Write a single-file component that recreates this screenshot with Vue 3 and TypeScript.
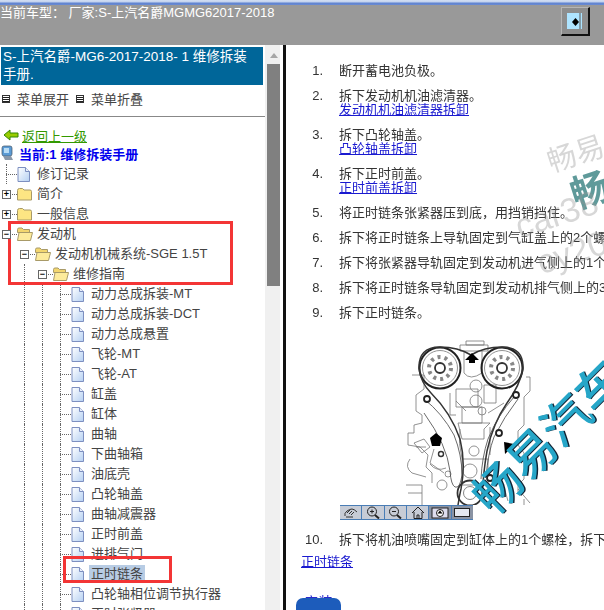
<script setup lang="ts">
interface TreeRow {
  label: string
  depth: number
  kind: 'doc' | 'plus' | 'minus'
  selected?: boolean
}
interface Step {
  num: string
  text: string
  link?: string
}

const leafNames = [
  '动力总成拆装-MT', '动力总成拆装-DCT', '动力总成悬置', '飞轮-MT', '飞轮-AT', '缸盖', '缸体', '曲轴',
  '下曲轴箱', '油底壳', '凸轮轴盖', '曲轴减震器', '正时前盖', '进排气门', '正时链条', '凸轮轴相位调节执行器', '正时张紧器',
]

const rows: TreeRow[] = [
  { label: '修订记录', depth: 0, kind: 'doc' },
  { label: '简介', depth: 0, kind: 'plus' },
  { label: '一般信息', depth: 0, kind: 'plus' },
  { label: '发动机', depth: 0, kind: 'minus' },
  { label: '发动机机械系统-SGE 1.5T', depth: 1, kind: 'minus' },
  { label: '维修指南', depth: 2, kind: 'minus' },
  ...leafNames.map((label): TreeRow => ({ label, depth: 3, kind: 'doc', selected: label === '正时链条' })),
]

const stepsTop: Step[] = [
  { num: '1.', text: '断开蓄电池负极。' },
  { num: '2.', text: '拆下发动机机油滤清器。', link: '发动机机油滤清器拆卸' },
  { num: '3.', text: '拆下凸轮轴盖。', link: '凸轮轴盖拆卸' },
  { num: '4.', text: '拆下正时前盖。', link: '正时前盖拆卸' },
  { num: '5.', text: '将正时链条张紧器压到底，用挡销挡住。' },
  { num: '6.', text: '拆下将正时链条上导轨固定到气缸盖上的2个螺栓。' },
  { num: '7.', text: '拆下将张紧器导轨固定到发动机进气侧上的1个螺栓。' },
  { num: '8.', text: '拆下将正时链条导轨固定到发动机排气侧上的3个螺栓。' },
  { num: '9.', text: '拆下正时链条。' },
]
</script>

<template>
  <div class="page">
    <header class="topbar">
      <div class="strip"></div>
      <div class="topbar-body">
        <span class="car">当前车型： 厂家:S-上汽名爵MGMG62017-2018</span>
        <div class="toggle">
          <div class="toggle-inner">
            <svg width="17" height="18" viewBox="0 0 17 18">
              <path d="M5 9l3.500-4 3.500 4-3.500 4z" fill="#000" />
              <path d="M13 0v18" stroke="#555" stroke-width="1" />
            </svg>
          </div>
        </div>
      </div>
    </header>

    <div class="main">
      <aside class="side">
        <div class="side-inner">
          <div class="manual-title">S-上汽名爵-MG6-2017-2018- 1 维修拆装手册.</div>
          <div class="menu-row">
            <span class="menu-item"><i class="menu-ico"></i>菜单展开</span>
            <span class="menu-item"><i class="menu-ico"></i>菜单折叠</span>
          </div>
          <div class="back">
            <svg width="16" height="12" viewBox="0 0 16 12">
              <path d="M1 6l6-5v3h8v4H7v3z" fill="#9c0" stroke="#380" stroke-width="1" />
            </svg>
            <a class="back-link">返回上一级</a>
          </div>
          <div class="current">
            <svg width="13" height="17" viewBox="0 0 13 17">
              <rect x="1" y="1" width="10" height="10" rx="2" fill="#5b9bd5" stroke="#456" stroke-width=".7" />
              <rect x="3" y="3" width="5" height="5" fill="#b8dcf5" />
              <path d="M2 11h8l2 4H4z" fill="#8a98a8" />
            </svg>
            <span>当前:1 维修拆装手册</span>
          </div>
          <div class="tree">
            <div v-for="row in rows" :key="row.label" class="tree-row">
              <span v-for="n in row.depth" :key="n" class="guide" :class="{ blank: n === 1 }"></span>
              <span class="joint" :class="{ 'joint-doc': row.kind === 'doc' }">
                <span v-if="row.kind !== 'doc'" class="box">{{ row.kind === 'plus' ? '+' : '−' }}</span>
              </span>
              <span class="icon-cell">
                <svg v-if="row.kind === 'doc'" width="13" height="15" viewBox="0 0 13 15">
                  <defs>
                    <linearGradient id="docFill" x1="0" y1="0" x2="1" y2="1">
                      <stop offset="0" stop-color="#fff" />
                      <stop offset="1" stop-color="#b5d0f2" />
                    </linearGradient>
                  </defs>
                  <path d="M1 .5h7.500l4 4v10H1z" fill="url(#docFill)" stroke="#7d8fc0" />
                  <path d="M8.500.5v4h4" fill="#e8eefa" stroke="#7d8fc0" />
                </svg>
                <svg v-else-if="row.kind === 'plus'" width="15" height="14" viewBox="0 0 15 14">
                  <path d="M.5 3.500q0-2 2-2h3l1.500 1.500h6q1.500 0 1.500 1.500v8.500H.5z" fill="#fde583" stroke="#a89a68" />
                </svg>
                <svg v-else width="16" height="14" viewBox="0 0 16 14">
                  <path d="M.5 2.500q0-1.500 1.500-1.500h3l1.500 1.500h6v3H.5z" fill="#f3d66e" stroke="#a89a68" />
                  <path d="M.5 13.500l1.500-8h13.500l-2 8z" fill="#fdeb9b" stroke="#a89a68" />
                </svg>
              </span>
              <span class="label" :class="{ selected: row.selected }">{{ row.label }}</span>
            </div>
          </div>
        </div>
      </aside>

      <div class="scroll">
        <div class="scroll-arrow"></div>
        <div class="scroll-thumb"></div>
      </div>

      <main class="content">
        <div class="doc">
          <div v-for="step in stepsTop" :key="step.num" class="step">
            <span class="num">{{ step.num }}</span>
            <div class="step-text">
              <div>{{ step.text }}</div>
              <a v-if="step.link" class="link">{{ step.link }}</a>
            </div>
          </div>

          <div class="figure">
            <svg class="diagram" width="145" height="166" viewBox="0 0 145 166" fill="none" stroke="#777" stroke-width=".8">
              <!-- engine block outline -->
              <path d="M12 36h12v14l-8 6v16l6 4v8l-8 2v8H8v12l12 2 8 8-2 12 6 6v10M126 38h4v14l-6 6v28l-6 6v14l6 8v26l-6 6v8M6 146h16v20M8 154h14M10 120q-6 8 2 14l14 4M14 104l10-4 6 8-8 6z" />
              <path d="M56 50h22v18H56zM62 68h20v16H62zM50 54v22h6M84 46h12v18H84zM58 84h32l-6 6v10H62zM60 90q-2 14 2 30M90 88v28M62 120h26v26H62z" />
              <path d="M60 6h28v6H60zM66 2h18v4H66zM64 12v22q6 8 18 0V12M56 62l10 10M88 74l16-10" />
              <circle cx="76" cy="47" r="6" /><circle cx="76" cy="62" r="6" /><circle cx="82" cy="72" r="4" />
              <circle cx="74" cy="112" r="5" /><circle cx="70" cy="132" r="7" /><circle cx="48" cy="135" r="3" /><circle cx="42" cy="146" r="5" />
              <path d="M30 125q6 8 16 4M34 110l-4 14 14 10M16 108h10M104 148l4 14M118 150l12 14M124 160v6" />

              <!-- sprockets -->
              <circle cx="40" cy="29" r="20.500" stroke="#222" stroke-width="2" />
              <circle cx="40" cy="29" r="17.500" stroke="#777" />
              <circle cx="40" cy="29" r="11" stroke="#888" stroke-width="4" stroke-dasharray="3 4" />
              <circle cx="40" cy="29" r="5" stroke="#333" stroke-width="1.800" />
              <circle cx="102" cy="29" r="20.500" stroke="#222" stroke-width="2" />
              <circle cx="102" cy="29" r="17.500" stroke="#777" />
              <circle cx="102" cy="29" r="11" stroke="#888" stroke-width="4" stroke-dasharray="3 4" />
              <circle cx="102" cy="29" r="5" stroke="#333" stroke-width="1.800" />
              <circle cx="70" cy="154" r="12.500" stroke="#333" stroke-width="1.800" />
              <circle cx="70" cy="154" r="6.500" stroke="#666" />

              <!-- chain and guides -->
              <path d="M19 30q-1-22 21-22 18 0 31 8 13-8 31-8 22 0 21 22-3 16-16 34-14 20-20 48-4 22-5 50" stroke="#333" stroke-width="1.500" />
              <path d="M19 30q2 14 12 24 20 20 29 46 6 24 1 50-1 4-3 16" stroke="#333" stroke-width="1.500" />
              <path d="M24 60q18 14 30 36 8 20 8 40-2 14-7 12-4-2-5-16-3-26-26-58" stroke="#444" />
              <path d="M114 58q-16 18-26 42-6 18-7 40M118 60q-14 18-24 38-6 16-8 40" stroke="#444" />
              <circle cx="27" cy="60" r="3" fill="#fff" stroke="#222" stroke-width="1.800" />
              <circle cx="116" cy="56" r="3" fill="#fff" stroke="#222" stroke-width="1.800" />
              <circle cx="99" cy="94" r="3" fill="#fff" stroke="#222" stroke-width="1.800" />
              <circle cx="90" cy="139" r="3" fill="#fff" stroke="#222" stroke-width="1.800" />
              <circle cx="41" cy="115" r="2.500" stroke="#333" stroke-width="1.400" />

              <!-- arrows -->
              <path d="M72 14l7 7h-4v3h-6v-3h-4z" fill="#000" stroke="none" />
              <path d="M36 94l6 5-2 8h-8l-2-8z" fill="#000" stroke="none" />
              <path d="M104 103l10 2-3 3 4 4-3 3-4-3-3 3z" fill="#000" stroke="none" />
            </svg>
          </div>

          <div class="viewer-tools">
            <span class="tool">
              <svg width="16" height="12" viewBox="0 0 16 12" fill="none" stroke="#333"><path d="M2 9q-1-3 2-5t5-2q2 0 5 3M4 6l3-3M6 7l3-3M8 8l3-3M3 10h7" /></svg>
            </span>
            <span class="tool">
              <svg width="16" height="13" viewBox="0 0 16 13" fill="none" stroke="#222"><circle cx="7" cy="5.500" r="4.500" /><path d="M10 9l4 3.500" stroke-width="2" /><path d="M5 5.500h4M7 3.500v4" /></svg>
            </span>
            <span class="tool">
              <svg width="16" height="13" viewBox="0 0 16 13" fill="none" stroke="#222"><circle cx="7" cy="5.500" r="4.500" /><path d="M10 9l4 3.500" stroke-width="2" /><path d="M5 5.500h4" /></svg>
            </span>
            <span class="tool">
              <svg width="14" height="13" viewBox="0 0 14 13" fill="none" stroke="#222"><path d="M1 7l6-6 6 6M3 6v6.500h8V6M6 12.500V9h2v3.500" /></svg>
            </span>
            <span class="tool tool-dark">
              <svg width="18" height="13" viewBox="0 0 18 13" fill="none" stroke="#222"><rect x="1" y="2" width="16" height="10" fill="#dde" /><circle cx="9" cy="7" r="3.500" fill="#fff" /><path d="M9 4.500l2.500 3h-5z" fill="#000" stroke="none" /></svg>
            </span>
            <span class="tool tool-dark">
              <svg width="18" height="11" viewBox="0 0 18 11" fill="none" stroke="#222"><rect x="1.500" y="1.500" width="15" height="8" fill="#e4e8f0" /></svg>
            </span>
          </div>

          <div class="step step-last">
            <span class="num">10.</span>
            <div class="step-text">拆下将机油喷嘴固定到缸体上的1个螺栓，拆下机油喷嘴。</div>
          </div>

          <a class="link link-bottom">正时链条</a>
          <div class="install">安装</div>

          <div class="wm wm-gray wm-a">畅易</div>
          <div class="wm wm-b">畅</div>
          <div class="wm wm-gray wm-c">car38</div>
          <div class="wm wm-gray wm-d">cy20</div>
          <div class="wm wm-main">畅易汽车</div>
        </div>
      </main>
    </div>

    <div class="mark mark-tree"></div>
    <div class="mark mark-leaf"></div>
  </div>
</template>

<style>
html,
body {
  margin: 0;
  background: #fff;
}
</style>

<style scoped>
.page {
  position: relative;
  width: 604px;
  height: 610px;
  overflow: hidden;
  background: #fff;
  font-family: "Liberation Sans", "Noto Sans CJK SC", sans-serif;
  font-size: 13px;
  color: #333;
}

.topbar {
  height: 45px;
  background: #999;
}

.strip {
  height: 5px;
  background: linear-gradient(#d3dff3 0, #c2d2ee 40%, #5f83d0 60%, #6a8bd2 100%);
}

.topbar-body {
  display: flex;
  justify-content: space-between;
  padding-right: 14px;
}

.car {
  color: #fff;
  font-size: 13px;
  line-height: 16px;
}

.toggle {
  box-sizing: border-box;
  width: 29px;
  height: 29px;
  margin-top: 2px;
  padding: 5px 6px 5px 5px;
  background: #8d8d8d;
  border-top: 1px solid #b5b5b5;
  border-left: 1px solid #b5b5b5;
  border-right: 2px solid #111;
  border-bottom: 2px solid #111;
}

.toggle-inner {
  height: 100%;
  background: #aee4ff;
  overflow: hidden;
}

.toggle-inner svg {
  display: block;
}

.main {
  display: flex;
  height: 565px;
}

.side {
  width: 265px;
  flex: none;
  overflow: hidden;
}

.side-inner {
  padding-top: 2px;
}

.manual-title {
  box-sizing: border-box;
  width: 262px;
  height: 38px;
  margin-left: 1px;
  padding: 1px 8px 1px 2px;
  background: #006699;
  color: #fff;
  font-size: 13.5px;
  line-height: 18px;
}

.menu-row {
  display: flex;
  gap: 7px;
  height: 32px;
  align-items: center;
  padding: 4px 0 8px 2px;
  border-bottom: 1px solid #888;
  box-sizing: border-box;
  margin-bottom: 9px;
  color: #444;
}

.menu-item {
  display: flex;
  align-items: center;
  gap: 7px;
}

.menu-ico {
  display: block;
  box-sizing: border-box;
  width: 8px;
  height: 8px;
  border: 1px solid #333;
  background: repeating-linear-gradient(#fff 0 1px, #222 1px 2px);
}

.back {
  display: flex;
  align-items: center;
  gap: 3px;
  height: 18px;
  padding-left: 3px;
}

.back-link {
  color: #339900;
  text-decoration: underline;
}

.current {
  display: flex;
  align-items: center;
  gap: 5px;
  height: 19px;
  margin-bottom: 1px;
  padding-left: 1px;
  color: #0000ee;
  font-weight: 700;
}

.tree {
  display: flex;
  flex-direction: column;
}

.tree-row {
  display: flex;
  align-items: center;
  height: 20px;
  flex: none;
  white-space: nowrap;
  color: #444;
}

.guide {
  position: relative;
  flex: none;
  width: 18px;
  height: 20px;
  box-sizing: border-box;
}

.guide::before {
  content: "";
  position: absolute;
  left: 6px;
  top: 0;
  bottom: 0;
  border-left: 1px dotted #666;
}

.guide.blank::before {
  display: none;
}

.joint {
  position: relative;
  flex: none;
  width: 17px;
  height: 20px;
}

.joint::before {
  content: "";
  position: absolute;
  left: 6px;
  right: 0;
  top: 10px;
  border-top: 1px dotted #666;
}

.joint-doc::after {
  content: "";
  position: absolute;
  left: 6px;
  top: 0;
  bottom: 0;
  border-left: 1px dotted #666;
}

.box {
  position: absolute;
  z-index: 1;
  left: 2px;
  top: 6px;
  box-sizing: border-box;
  width: 9px;
  height: 9px;
  border: 1px solid #666;
  background: #fff;
  color: #000;
  font-size: 9px;
  font-weight: 700;
  line-height: 6px;
  text-align: center;
}

.icon-cell {
  flex: none;
  display: flex;
  align-items: center;
  width: 20px;
  height: 20px;
}

.label {
  margin-left: -2px;
  padding: 0 2px;
  line-height: 18px;
}

.label.selected {
  background: #b8cce4;
}

.scroll {
  position: relative;
  box-sizing: border-box;
  width: 15px;
  flex: none;
  padding: 3px 0 0 2px;
  background: #f0f0f0;
}

.scroll-arrow {
  width: 0;
  margin: 5px auto 6px;
  border-left: 4px solid transparent;
  border-right: 4px solid transparent;
  border-bottom: 5px solid #a6a6a6;
}

.scroll-thumb {
  height: 222px;
  background: #808080;
}

.content {
  flex: 1;
  min-width: 0;
  box-sizing: border-box;
  margin-left: 3px;
  border-left: 3px solid #111;
  overflow: hidden;
}

.doc {
  position: relative;
  height: 100%;
  box-sizing: border-box;
  padding-top: 19px;
  filter: blur(0.4px);
  white-space: nowrap;
}

.step {
  display: flex;
  gap: 16px;
  margin-bottom: 11px;
  line-height: 14px;
}

.num {
  width: 37px;
  flex: none;
  text-align: right;
}

.step-text {
  color: #333;
}

.link {
  color: #1a1ad0;
  text-decoration: underline;
}

.figure {
  padding-left: 114px;
  margin-top: 19px;
  height: 166px;
  overflow: hidden;
}

.diagram {
  display: block;
}

.viewer-tools {
  display: flex;
  width: 133px;
  height: 15px;
  margin-left: 54px;
  background: #4a7db5;
  padding: 1px 0;
  gap: 1px;
  box-sizing: border-box;
}

.tool {
  flex: 1;
  display: flex;
  align-items: center;
  justify-content: center;
  background: #c7ccd6;
  overflow: hidden;
}

.tool-dark {
  background: #8a93a3;
}

.step-last {
  margin-top: 13px;
  margin-bottom: 8px;
}

.link-bottom {
  display: block;
  width: max-content;
  margin-left: 15px;
  line-height: 14px;
}

.install {
  position: relative;
  width: 45px;
  margin: 25px 0 0 10px;
  color: #2a2acc;
  font-size: 14px;
  line-height: 16px;
  text-align: center;
}

/* the blue tab sits over the heading, only the tops of the letters peek out */
.install::after {
  content: "";
  position: absolute;
  left: 0;
  right: 0;
  top: 4px;
  height: 30px;
  border-radius: 7px 7px 0 0;
  background: #1d5cbb;
}

.wm {
  position: absolute;
  line-height: 1;
  pointer-events: none;
}

.wm-gray {
  color: rgba(150, 150, 150, 0.38);
}

.wm-a {
  left: 261px;
  top: 95px;
  font-size: 29px;
  transform: rotate(-18deg);
}

.wm-b {
  left: 285px;
  top: 127px;
  font-size: 38px;
  font-weight: 700;
  color: #5f9a9a;
  transform: rotate(-18deg);
}

.wm-c {
  left: 228px;
  top: 152px;
  font-size: 34px;
  transform: rotate(-18deg);
}

.wm-d {
  left: 250px;
  top: 190px;
  font-size: 34px;
  transform: rotate(-18deg);
}

.wm-main {
  left: 213px;
  top: 430px;
  font-size: 48px;
  font-weight: 500;
  color: #26a6c8;
  text-shadow: 1px 1px 0 #123;
  transform: rotate(-45deg);
  transform-origin: 0 100%;
}

.mark {
  position: absolute;
  box-sizing: border-box;
  border: 3px solid #f33535;
  pointer-events: none;
}

.mark-tree {
  left: 8px;
  top: 221px;
  width: 225px;
  height: 64px;
}

.mark-leaf {
  left: 63px;
  top: 556px;
  width: 109px;
  height: 27px;
}
</style>
